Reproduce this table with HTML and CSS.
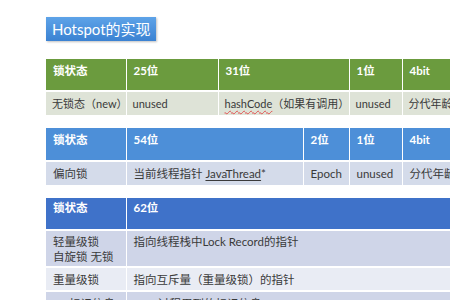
FILE: index.html
```html
<!DOCTYPE html>
<html lang="zh">
<head>
<meta charset="utf-8">
<title>Hotspot的实现</title>
<link rel="stylesheet" href="styles.css">
</head>
<body>
<div class="slide">
  <div class="title">Hotspot的实现</div>

  <table class="tbl t1">
    <colgroup><col class="c80"><col style="width:92px"><col style="width:131px"><col style="width:53px"><col style="width:90px"></colgroup>
    <thead><tr><th>锁状态</th><th>25位</th><th>31位</th><th>1位</th><th>4bit</th></tr></thead>
    <tbody><tr><td>无锁态（new）</td><td>unused</td><td><span class="spell">hashCode</span>（如果有调用）</td><td>unused</td><td>分代年龄</td></tr></tbody>
  </table>

  <table class="tbl t2">
    <colgroup><col class="c80"><col style="width:177px"><col style="width:46px"><col style="width:53px"><col style="width:90px"></colgroup>
    <thead><tr><th>锁状态</th><th>54位</th><th>2位</th><th>1位</th><th>4bit</th></tr></thead>
    <tbody><tr><td>偏向锁</td><td>当前线程指针 <span class="ul">JavaThread</span>*</td><td>Epoch</td><td>unused</td><td>分代年龄</td></tr></tbody>
  </table>

  <table class="tbl t3">
    <colgroup><col class="c80"><col style="width:366px"></colgroup>
    <thead><tr><th>锁状态</th><th>62位</th></tr></thead>
    <tbody>
      <tr class="r1"><td>轻量级锁<br>自旋锁 无锁</td><td class="top">指向线程栈中Lock Record的指针</td></tr>
      <tr class="r2"><td>重量级锁</td><td>指向互斥量（重量级锁）的指针</td></tr>
      <tr class="r3"><td>GC标记信息</td><td>CMS过程用到的标记信息</td></tr>
    </tbody>
  </table>
</div>
</body>
</html>
```

FILE: styles.css
```css
html, body {
  margin: 0;
  padding: 0;
  overflow: hidden;
  background: #ffffff;
}
body {
  width: 450px;
  height: 300px;
  font-family: Lato, "Noto Sans CJK SC", sans-serif;
  color: #3a3a3a;
}
.slide {
  padding: 17px 0 0 46px;
  width: 600px;
}
.title {
  display: table;
  height: 24px;
  line-height: 24px;
  padding: 0 5px 0 6px;
  color: #ffffff;
  font-size: 15px;
  white-space: nowrap;
  background: linear-gradient(#5ea3e8, #3b82d2);
  box-shadow: 1px 1px 2px rgba(0,0,0,0.25);
}
.tbl {
  border-collapse: collapse;
  table-layout: fixed;
  width: 446px;
  font-size: 11.5px;
}
.c80 { width: 80px; }
.tbl th {
  color: #ffffff;
  font-weight: bold;
  text-align: left;
  vertical-align: top;
  padding: 4px 0 0 7px;
  height: 27px;
  line-height: 15px;
  border-left: 1px solid #ffffff;
  border-bottom: 2px solid #ffffff;
  white-space: nowrap;
  overflow: hidden;
}
.tbl td {
  text-align: left;
  vertical-align: middle;
  padding: 0 0 0 7px;
  line-height: 15px;
  border-left: 1px solid #ffffff;
  white-space: nowrap;
  overflow: hidden;
}
.tbl th:first-child, .tbl td:first-child { border-left: none; }

.t1 { margin-top: 18px; }
.t1 th { background: #6b9b3e; }
.t1 td { background: #dee3d7; height: 23px; font-size: 11px; padding-left: 6px; }

.t2 { margin-top: 13px; }
.t2 th { background: #4d8fd8; height: 28px; }
.t2 td { background: #d4dbea; height: 23px; }

.t3 { margin-top: 13px; }
.t3 th { background: #3f72c9; padding-top: 2px; height: 29px; }
.t3 td { border-bottom: 2px solid #ffffff; }
.t3 .r1 td { background: #cfd5e8; height: 32px; }
.t3 .r1 td.top { vertical-align: top; padding-top: 3px; }
.t3 .r2 td { background: #e9ecf4; height: 22px; }
.t3 .r3 td { background: #cfd5e8; height: 22px; }

.spell {
  text-decoration: underline wavy #e05050;
  text-decoration-thickness: 1px;
  text-underline-offset: 2px;
}
.ul {
  text-decoration: underline;
  text-underline-offset: 2px;
}
```
